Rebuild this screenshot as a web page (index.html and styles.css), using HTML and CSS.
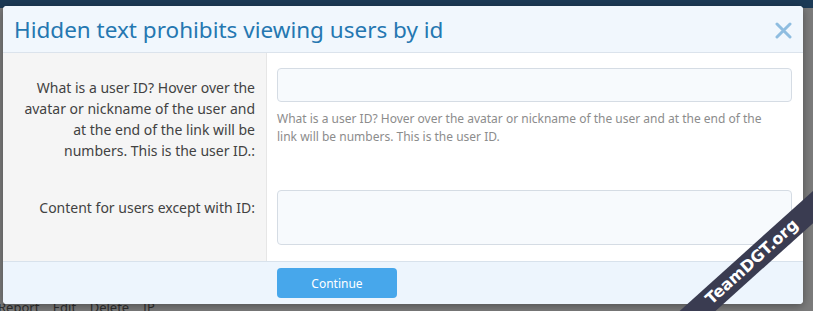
FILE: index.html
```html
<!DOCTYPE html>
<html lang="en">
<head>
    <meta charset="UTF-8">
    <title>Hidden text prohibits viewing users by id</title>
    <link rel="stylesheet" href="styles.css">
</head>
<body>

    <div class="topbar"></div>

    <div class="overlay">
        <div class="dialog">
            <div class="dialog-head">
                <h2>Hidden text prohibits viewing users by id</h2>
                <svg class="close" width="17" height="17" viewBox="0 0 17 17">
                    <path d="M2 2 L15 15 M15 2 L2 15" stroke="#8fbde0" stroke-width="3" stroke-linecap="round"/>
                </svg>
            </div>

            <div class="form-row">
                <div class="form-label first">What is a user ID? Hover over the avatar or nickname of the user and at the end of the link will be numbers. This is the user ID.:</div>
                <div class="form-field first">
                    <div class="input"></div>
                    <p class="explain">What is a user ID? Hover over the avatar or nickname of the user and at the end of the link will be numbers. This is the user ID.</p>
                </div>
            </div>

            <div class="form-row">
                <div class="form-label">Content for users except with ID:</div>
                <div class="form-field last">
                    <div class="input tall"></div>
                </div>
            </div>

            <div class="dialog-foot">
                <button class="btn">Continue</button>
            </div>
        </div>

        <div class="page-links">Report &nbsp;&nbsp; Edit &nbsp;&nbsp; Delete &nbsp;&nbsp; IP</div>
    </div>

    <div class="ribbon">TeamDGT.org</div>

</body>
</html>
```

FILE: styles.css
```css
body {
    margin: 0;
    font-family: "Noto Sans", sans-serif;
    background-color: #7b7b7b;
    width: 813px;
    height: 311px;
    overflow: hidden;
    position: relative;
}

.topbar {
    height: 8px;
    background-color: #1c3a56;
}

.overlay {
    margin-top: -2px;
}

.dialog {
    margin-left: 3px;
    width: 800px;
    background-color: #fff;
    border-radius: 4px;
    overflow: hidden;
    box-shadow: 0 2px 8px rgba(0,0,0,0.35);
    position: relative;
}

.dialog-head {
    display: flex;
    align-items: center;
    justify-content: space-between;
    height: 46px;
    padding: 0 11px 0 11px;
    background-color: #f1f7fd;
    border-bottom: 1px solid #dbe3ec;
}

.dialog-head h2 {
    margin: 0;
    font-weight: normal;
    font-size: 22.5px;
    color: #2577b1;
}

.close {
    margin-top: 2px;
}

.form-row {
    display: grid;
    grid-template-columns: 264px 1fr;
}

.form-label {
    background-color: #f5f5f5;
    border-right: 1px solid #e6e6e6;
    padding: 22px 11px 0 16px;
    text-align: right;
    font-size: 14px;
    line-height: 21px;
    color: #424242;
}

.form-label.first {
    padding-top: 24px;
}

.form-field {
    padding: 15px 11px 0 10px;
}

.form-field.first {
    padding-bottom: 29px;
}

.form-field.last {
    padding-bottom: 16px;
}

.input {
    height: 32px;
    border: 1px solid #d5dce4;
    border-radius: 4px;
    background-color: #f7fafd;
}

.input.tall {
    height: 53px;
}

.explain {
    margin: 8px 0 0;
    padding-right: 24px;
    font-size: 12px;
    line-height: 18px;
    color: #8c8c8c;
}

.dialog-foot {
    background-color: #edf5fd;
    border-top: 1px solid #d8e2ec;
    padding: 6px 0 6px 274px;
}

.btn {
    display: block;
    width: 120px;
    height: 30px;
    border: none;
    border-radius: 4px;
    background-color: #47a7eb;
    color: #fff;
    font-family: "Noto Sans", sans-serif;
    font-size: 12px;
}

.page-links {
    height: 8px;
    overflow: hidden;
    font-size: 13px;
    line-height: 6px;
    color: #2e2e2e;
    margin-left: -2px;
}

.ribbon {
    position: absolute;
    left: 612px;
    top: 250px;
    width: 280px;
    height: 24px;
    line-height: 24px;
    background-color: #3a3c51;
    color: #fff;
    font-family: "DejaVu Sans", sans-serif;
    font-weight: bold;
    font-size: 16px;
    text-align: center;
    transform: rotate(-42deg);
}
```
